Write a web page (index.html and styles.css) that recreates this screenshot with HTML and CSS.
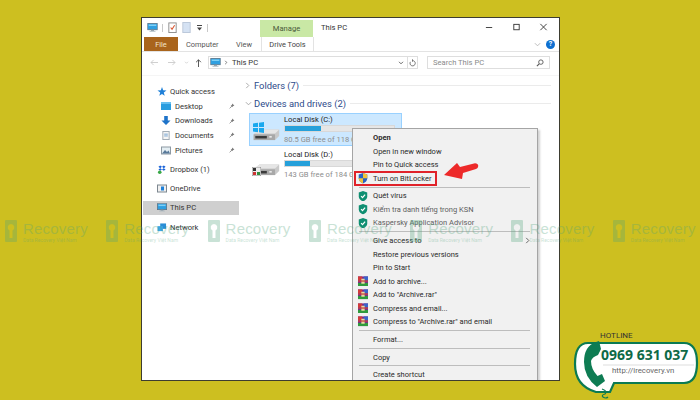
FILE: index.html
```html
<!DOCTYPE html>
<html lang="vi">
<head>
<meta charset="utf-8">
<title>This PC</title>
<link rel="stylesheet" href="styles.css">
</head>
<body>
<svg class="defs" width="0" height="0">
  <defs>
    <symbol id="pc" viewBox="0 0 14 12"><rect x="0.5" y="0.5" width="13" height="8.5" fill="#2f9fe0" stroke="#5a6f80"/><rect x="2" y="2" width="10" height="2" fill="#7fd0f5"/><rect x="5" y="9" width="4" height="1.5" fill="#8a9aa5"/><rect x="3" y="10.5" width="8" height="1" fill="#9fb0ba"/></symbol>
    <symbol id="pin" viewBox="0 0 8 8"><path d="M4.5 0.8 7.2 3.5 5.7 4 4 5.8 2.2 4 4 2.3Z" fill="#7a7a7a"/><path d="M2.8 5.2 0.8 7.2" stroke="#7a7a7a" stroke-width="1"/></symbol>
    <symbol id="shield" viewBox="0 0 10 11"><path d="M5 0 9.5 1.6V5.5C9.5 8 7.5 10 5 11 2.5 10 .5 8 .5 5.5V1.6Z" fill="#0f8f72"/><path d="M3 5.4 4.5 7 7.2 3.8" fill="none" stroke="#fff" stroke-width="1.3"/></symbol>
    <symbol id="rar" viewBox="0 0 12 12"><rect width="12" height="12" fill="#7b2a8f"/><rect y="0" width="5" height="5" fill="#d23a3a"/><rect x="7" y="0" width="5" height="5" fill="#3a63c9"/><rect y="8" width="12" height="4" fill="#2f9a3d"/><rect x="4" y="3" width="4" height="6" fill="#e8d9a0"/><rect y="5" width="12" height="1.5" fill="#c9423e"/></symbol>
    <symbol id="drive" viewBox="0 0 34 20"><path d="M2 11 9 5H33V13L28 18H2Z" fill="#c9c9c9"/><path d="M9 5H33L28 10H3Z" fill="#e6e6e6"/><rect x="2" y="11" width="26" height="7" fill="#a8a8a8"/><rect x="4" y="13" width="14" height="3" fill="#3a3a3a"/><rect x="21" y="13" width="3" height="2" fill="#e8e8e8"/></symbol>
    <symbol id="mark" viewBox="0 0 12 22"><path fill-rule="evenodd" d="M1 0H11Q12 0 12 1V21Q12 22 11 22H1Q0 22 0 21V1Q0 0 1 0ZM6 4A3.4 3.4 0 0 0 4.5 10.4V18H7.5V10.4A3.4 3.4 0 0 0 6 4Z" fill="#4fa37a"/></symbol>
  </defs>
</svg>

<main class="window">
  <header class="titlebar">
    <svg class="ic14" viewBox="0 0 14 12"><use href="#pc"/></svg>
    <span class="tsep"></span>
    <svg class="qat-doc" viewBox="0 0 9 12"><rect x="0.5" y="1" width="8" height="10.5" fill="#fff" stroke="#8a8a8a"/><path d="M2.5 6 4 8 6.8 3.5" fill="none" stroke="#d9532c" stroke-width="1.1"/></svg>
    <svg class="qat-doc gap" viewBox="0 0 9 12"><rect x="0.5" y="0.5" width="8" height="11" fill="#d5e2f3" stroke="#b9c6d8"/></svg>
    <svg class="qat-drop" viewBox="0 0 5 6"><rect y="0" width="5" height="1" fill="#444"/><path d="M0 2.5H5L2.5 5.5Z" fill="#444"/></svg>
    <span class="tsep"></span>
    <div class="manage">Manage</div>
    <div class="title">This PC</div>
    <div class="winbtns">
      <svg class="wb" viewBox="0 0 10 10"><path d="M1 5H8" stroke="#333" stroke-width="1"/></svg>
      <svg class="wb" viewBox="0 0 10 10"><rect x="2" y="1.5" width="6" height="6" fill="none" stroke="#333"/></svg>
      <svg class="wb" viewBox="0 0 10 10"><path d="M1.5 1 8.5 8M8.5 1 1.5 8" stroke="#333" stroke-width="1"/></svg>
    </div>
  </header>

  <nav class="tabs">
    <div class="tab-file">File</div>
    <div class="tab t-computer">Computer</div>
    <div class="tab t-view">View</div>
    <div class="tab t-drive">Drive Tools</div>
    <svg class="chev" viewBox="0 0 8 5"><path d="M1 1 4 4 7 1" fill="none" stroke="#b5b5b5"/></svg>
    <span class="help">?</span>
  </nav>

  <section class="addr">
    <svg class="nav-a" viewBox="0 0 10 8"><path d="M9 4H1M4 1 1 4 4 7" fill="none" stroke="#c9c9c9"/></svg>
    <svg class="nav-a" viewBox="0 0 10 8"><path d="M1 4H9M6 1 9 4 6 7" fill="none" stroke="#c9c9c9"/></svg>
    <svg class="nav-s" viewBox="0 0 6 4"><path d="M1 1 3 3 5 1" fill="none" stroke="#c9c9c9"/></svg>
    <svg class="nav-u" viewBox="0 0 8 10"><path d="M4 10V1M1 4 4 1 7 4" fill="none" stroke="#444" stroke-width="1.1"/></svg>
    <div class="addrbox">
      <svg class="ic-addr" viewBox="0 0 14 12"><use href="#pc"/></svg>
      <svg class="crumb" viewBox="0 0 4 6"><path d="M1 1 3 3 1 5" fill="none" stroke="#666"/></svg>
      <span class="addrtext">This PC</span>
      <svg class="addrdrop" viewBox="0 0 7 5"><path d="M1 1 3.5 3.5 6 1" fill="none" stroke="#555" stroke-width="1.1"/></svg>
    </div>
    <div class="refresh"><svg viewBox="0 0 8 9"><path d="M4 1.8A3 3 0 1 1 1.6 3.2M4 .3V3" fill="none" stroke="#666"/></svg></div>
    <div class="search">
      <span>Search This PC</span>
      <svg viewBox="0 0 9 9"><circle cx="5.5" cy="3.5" r="2.5" fill="none" stroke="#555"/><path d="M3.6 5.4 1 8" stroke="#555" stroke-width="1.2"/></svg>
    </div>
  </section>

  <div class="main">
    <aside class="side">
      <div class="s0"><svg class="si" viewBox="0 0 10 10"><path d="M5 0 6.3 3.6 10 3.8 7 6.1 8 9.8 5 7.7 2 9.8 3 6.1 0 3.8 3.7 3.6Z" fill="#1f80d8"/></svg>Quick access</div>
      <div class="s1"><svg class="si" viewBox="0 0 10 9"><rect y="1" width="10" height="7" fill="#2a9ddf"/><rect y="0" width="10" height="2" fill="#66bff0"/></svg>Desktop<svg class="pin" viewBox="0 0 8 8"><use href="#pin"/></svg></div>
      <div class="s1"><svg class="si" viewBox="0 0 10 10"><path d="M3 0H7V5H10L5 10 0 5H3Z" fill="#1e73c9"/></svg>Downloads<svg class="pin" viewBox="0 0 8 8"><use href="#pin"/></svg></div>
      <div class="s1"><svg class="si" viewBox="0 0 10 10"><rect x="1.5" y="0.5" width="7" height="9" fill="#f5f5f5" stroke="#9aa5b0"/><path d="M3 3.5H7M3 5.5H7" stroke="#6f9fcf"/></svg>Documents<svg class="pin" viewBox="0 0 8 8"><use href="#pin"/></svg></div>
      <div class="s1"><svg class="si" viewBox="0 0 10 8"><rect x="0.5" y="0.5" width="9" height="7" fill="#e4eef3" stroke="#8d99a3"/><path d="M1 7 4 3.5 6 5.5 7.5 4 9 7Z" fill="#58799a"/></svg>Pictures<svg class="pin" viewBox="0 0 8 8"><use href="#pin"/></svg></div>
      <div class="s0 g"><svg class="si" viewBox="0 0 10 10"><path d="M3 .5 5 2 3 3.5 1 2ZM7 .5 9 2 7 3.5 5 2ZM3 3.5 5 5 3 6.5 1 5ZM7 3.5 9 5 7 6.5 5 5Z" fill="#1a63d8"/><circle cx="2.5" cy="8" r="2" fill="#39a845"/></svg>Dropbox (1)</div>
      <div class="s0 g"><svg class="si" viewBox="0 0 10 8"><rect x="0.5" y="0.5" width="9" height="7" fill="#f1f1f1" stroke="#7d8790"/><rect x="4" y="2" width="3" height="4" fill="#1f80d8"/></svg>OneDrive</div>
      <div class="s0 g active"><svg class="si" viewBox="0 0 14 12"><use href="#pc"/></svg>This PC</div>
      <div class="s0 g"><svg class="si" viewBox="0 0 10 10"><rect x="3" y="0.5" width="6.5" height="6" fill="#2a8ed6"/><rect x="0" y="3.5" width="6" height="5.5" fill="#3ba5e8"/></svg>Network</div>
    </aside>

    <section class="content">
      <div class="group"><svg class="gc" viewBox="0 0 5 8"><path d="M1 1 4 4 1 7" fill="none" stroke="#a0a0a0"/></svg><span>Folders (7)</span><i></i></div>
      <div class="group g2"><svg class="gc wide" viewBox="0 0 8 5"><path d="M1 1 4 4 7 1" fill="none" stroke="#a0a0a0"/></svg><span>Devices and drives (2)</span><i></i></div>

      <div class="drive selected">
        <div class="dicon">
          <svg class="winlogo" viewBox="0 0 11 11"><path d="M0 1.5 5 .8V5H0ZM6 .7 11 0V5H6ZM0 6H5V10.2L0 9.5ZM6 6H11V11L6 10.3Z" fill="#19a8ee"/></svg>
          <svg class="dsvg" viewBox="0 0 34 20"><use href="#drive"/></svg>
        </div>
        <div class="dinfo">
          <div class="dname">Local Disk (C:)</div>
          <div class="dbar"><b class="fill-c"></b></div>
          <div class="dfree">80.5 GB free of 118 GB</div>
        </div>
      </div>
      <div class="drive">
        <div class="dicon">
          <svg class="dsvg" viewBox="0 0 34 20"><use href="#drive"/></svg>
          <svg class="share" viewBox="0 0 9 9"><rect width="9" height="9" fill="#eee" stroke="#555" stroke-width=".6"/><rect x="1" y="1" width="3" height="3" fill="#333"/><rect x="5" y="5" width="3" height="3" fill="#2f8f3f"/><rect x="1" y="5" width="3" height="3" fill="#c33"/></svg>
        </div>
        <div class="dinfo">
          <div class="dname">Local Disk (D:)</div>
          <div class="dbar"><b class="fill-d"></b></div>
          <div class="dfree">143 GB free of 184 GB</div>
        </div>
      </div>
    </section>
  </div>

  <div class="menu">
    <div class="mi strong">Open</div>
    <div class="mi">Open in new window</div>
    <div class="mi">Pin to Quick access</div>
    <div class="mi red"><svg class="mic" viewBox="0 0 10 11"><path d="M5 0 9.5 1.6V5.5C9.5 8 7.5 10 5 11 2.5 10 .5 8 .5 5.5V1.6Z" fill="#2a62c4"/><path d="M5 0 9.5 1.6V5.5H5ZM5 5.5H.5C.5 8 2.5 10 5 11Z" fill="#f0c23a"/></svg>Turn on BitLocker</div>
    <hr>
    <div class="mi"><svg class="mic" viewBox="0 0 10 11"><use href="#shield"/></svg>Quét virus</div>
    <div class="mi faint"><svg class="mic" viewBox="0 0 10 11"><use href="#shield"/></svg>Kiểm tra danh tiếng trong KSN</div>
    <div class="mi faint"><svg class="mic" viewBox="0 0 10 11"><use href="#shield"/></svg>Kaspersky Application Advisor</div>
    <hr>
    <div class="mi">Give access to<svg class="marrow" viewBox="0 0 5 8"><path d="M1 1 4 4 1 7" fill="none" stroke="#555"/></svg></div>
    <div class="mi">Restore previous versions</div>
    <div class="mi">Pin to Start</div>
    <div class="mi"><svg class="mic" viewBox="0 0 12 12"><use href="#rar"/></svg>Add to archive...</div>
    <div class="mi"><svg class="mic" viewBox="0 0 12 12"><use href="#rar"/></svg>Add to "Archive.rar"</div>
    <div class="mi"><svg class="mic" viewBox="0 0 12 12"><use href="#rar"/></svg>Compress and email...</div>
    <div class="mi"><svg class="mic" viewBox="0 0 12 12"><use href="#rar"/></svg>Compress to "Archive.rar" and email</div>
    <hr>
    <div class="mi">Format...</div>
    <hr>
    <div class="mi">Copy</div>
    <hr>
    <div class="mi">Create shortcut</div>
  </div>
</main>

<svg class="arrow" viewBox="0 0 38 23"><path d="M2 12 15 0 18 4 33 .3Q36 .3 36.3 3 36 5.5 34 6L21 10 20 16Z" fill="#ed2a2a"/></svg>

<div class="marks">
  <div class="wm"><svg viewBox="0 0 12 22"><use href="#mark"/></svg><div><strong>Recovery</strong><small>Data Recovery Việt Nam</small></div></div>
  <div class="wm"><svg viewBox="0 0 12 22"><use href="#mark"/></svg><div><strong>Recovery</strong><small>Data Recovery Việt Nam</small></div></div>
  <div class="wm"><svg viewBox="0 0 12 22"><use href="#mark"/></svg><div><strong>Recovery</strong><small>Data Recovery Việt Nam</small></div></div>
  <div class="wm"><svg viewBox="0 0 12 22"><use href="#mark"/></svg><div><strong>Recovery</strong><small>Data Recovery Việt Nam</small></div></div>
  <div class="wm"><svg viewBox="0 0 12 22"><use href="#mark"/></svg><div><strong>Recovery</strong><small>Data Recovery Việt Nam</small></div></div>
  <div class="wm"><svg viewBox="0 0 12 22"><use href="#mark"/></svg><div><strong>Recovery</strong><small>Data Recovery Việt Nam</small></div></div>
  <div class="wm"><svg viewBox="0 0 12 22"><use href="#mark"/></svg><div><strong>Recovery</strong><small>Data Recovery Việt Nam</small></div></div>
</div>

<aside class="hotline">
  <svg class="hot-bg" viewBox="0 0 128 66">
    <path d="M16 9H112Q125 9 125 29 125 49 112 49H42L38 58H24Q3 52 3 30 3 9 16 9Z" fill="#fff" stroke="#0b7a52" stroke-width="2.2"/>
    <path d="M24 8Q12 12 12 28 12 43 25 53L33 47 30 40 25.500 42Q19 35 19 27 20 23 26 21L29 15 27 7Z" fill="#0e7c53"/>
    <path d="M30 55Q36 57 33 60 29 61 31 63 34 65 36 63" fill="none" stroke="#0e7c53" stroke-width="1.2"/>
    <path d="M31 31H122" stroke="#cfcfcf" stroke-width=".7"/>
  </svg>
  <span class="hl-label">HOTLINE</span>
  <span class="hl-num">0969 631 037</span>
  <span class="hl-url">http://irecovery.vn</span>
</aside>
</body>
</html>
```

FILE: styles.css
```css
* { box-sizing: border-box; }
html, body { margin: 0; height: 100%; }
body {
  width: 700px; height: 400px; overflow: hidden; position: relative;
  background: #cdbf20; padding: 17px 0 0 141px;
  font-family: Roboto, "Open Sans", sans-serif; color: #2b2b2b;
}
.defs { position: absolute; }
svg { display: block; flex: none; }

.window {
  position: relative; width: 419px; height: 364px; background: #fff;
  border: 1px solid #3d3d30; overflow: hidden; display: flex; flex-direction: column;
}

.titlebar { height: 19px; display: flex; align-items: center; padding-left: 5px; font-size: 8px; flex: none; }
.ic14 { width: 11px; height: 9px; }
.tsep { width: 1px; height: 8px; background: #c8c8c8; margin: 0 5px; }
.tsep:first-of-type { margin: 0 5px 0 4px; }
.qat-doc { width: 9px; height: 11px; }
.qat-doc.gap { margin-left: 5px; }
.qat-drop { width: 5px; height: 6px; margin-left: 6px; }
.manage {
  align-self: stretch; width: 53px; margin: 2px 0 0 47px; background: #c9e8a5; color: #4a5a3a;
  display: flex; align-items: center; justify-content: center; font-size: 7.6px;
}
.title { margin-left: 8px; font-size: 7.6px; color: #333; }
.winbtns { margin-left: auto; display: flex; gap: 18px; padding-right: 11px; }
.wb { width: 9px; height: 9px; }

.tabs { height: 15px; display: flex; align-items: center; flex: none; font-size: 7.4px; color: #555; border-bottom: 1px solid #e3e3e3; }
.tab-file { width: 34px; height: 14px; margin-left: 2px; background: #a9641c; color: #f4e4c8; display: flex; align-items: center; justify-content: center; }
.t-computer { margin-left: 8px; width: 32px; white-space: nowrap; }
.t-view { margin-left: 18px; width: 15px; }
.t-drive { width: 53px; height: 15px; margin-left: 10px; text-align: center; line-height: 15px; border: 1px solid #e3e3e3; border-top: 0; border-bottom: 0; color: #444; }
.chev { width: 7px; height: 5px; margin-left: auto; }
.help { width: 9px; height: 9px; margin: 0 4px 0 5px; border-radius: 50%; background: #0e6fd0; color: #fff; font-size: 7px; line-height: 9px; text-align: center; font-weight: 700; }

.addr { height: 24px; display: flex; align-items: center; padding: 0 8px 2px 8px; flex: none; border-bottom: 1px solid #f5f5f5; }
.nav-a { width: 9px; height: 7px; margin-right: 8px; }
.nav-s { width: 5px; height: 3px; margin-right: 6px; }
.nav-u { width: 7px; height: 8px; margin-right: 6px; }
.addrbox { width: 200px; height: 13px; border: 1px solid #dedede; display: flex; align-items: center; padding-left: 1px; font-size: 7.6px; }
.ic-addr { width: 11px; height: 9px; }
.crumb { width: 4px; height: 5px; margin: 0 4px 0 3px; }
.addrtext { color: #333; }
.addrdrop { width: 6px; height: 4px; margin-left: auto; margin-right: 3px; }
.refresh { width: 10px; height: 13px; border: 1px solid #dedede; border-left: 0; display: flex; align-items: center; justify-content: center; }
.refresh svg { width: 7px; height: 8px; }
.search { width: 123px; height: 13px; margin-left: 9px; border: 1px solid #dedede; display: flex; align-items: center; justify-content: space-between; padding: 0 5px; font-size: 7.6px; color: #8a8a8a; }
.search svg { width: 8px; height: 8px; }

.main { flex: 1; display: flex; min-height: 0; }
.side { width: 97px; padding: 8px 0 0 1px; font-size: 7.6px; color: #333; flex: none; }
.s0, .s1 { height: 14.7px; display: flex; align-items: center; }
.s0 { padding-left: 14px; }
.s1 { padding-left: 18px; }
.g { margin-top: 4.6px; }
.si { width: 10px; height: 9px; margin-right: 4px; }
.s0 .si { margin-right: 3px; }
.pin { width: 6px; height: 6px; margin-left: auto; margin-right: 4px; }
.active { background: #cfcfcf; }

.content { flex: 1; min-width: 0; padding: 3px 8px 0 6px; }
.group { height: 13px; display: flex; align-items: center; font-size: 9.4px; color: #2c4a8a; }
.group + .group { margin-top: 5px; }
.g2 { margin-bottom: 3px; }
.gc { width: 5px; height: 7px; margin: 0 4px 0 0; }
.gc.wide { width: 7px; height: 5px; margin: 0 2px 0 0; }
.group i { flex: 1; height: 1px; background: #ebebeb; margin-left: 4px; }

.drive { width: 153px; height: 33px; margin-left: 4px; display: flex; margin-bottom: 2px; border: 1px solid transparent; }
.selected { background: #cce8ff; border-color: #99d1ff; }
.dicon { width: 34px; position: relative; padding: 11px 0 0 2px; }
.dsvg { width: 28px; height: 17px; }
.winlogo { position: absolute; left: 3px; top: 8px; width: 11px; height: 11px; }
.share { position: absolute; left: 2px; top: 18px; width: 9px; height: 9px; }
.dinfo { flex: 1; min-width: 0; }
.dname { font-size: 7.6px; height: 11px; line-height: 11px; color: #222; }
.dbar { width: 111px; height: 7px; background: #e6e6e6; border: 1px solid #d8d8d8; }
.dbar b { display: block; height: 100%; background: #26a0da; }
.fill-c { width: 36px; }
.fill-d { width: 25px; }
.dfree { font-size: 7.6px; line-height: 13px; color: #8d8d8d; white-space: nowrap; margin-top: 1px; }

.menu {
  position: absolute; left: 210px; top: 110px; width: 186px; padding: 2px 2px 0 2px; height: 262px;
  background: #f1f1f1; border: 1px solid #a5a5a5; box-shadow: 2px 2px 2px rgba(0,0,0,.18);
  font-size: 7.5px; color: #2a2a2a;
}
.mi { height: 13.5px; padding-left: 18px; display: flex; align-items: center; position: relative; white-space: nowrap; }
.strong { font-weight: 700; }
.faint { color: #5f5f5f; }
.mic { position: absolute; left: 3px; top: 1.5px; width: 10px; height: 10.5px; }
.marrow { margin-left: auto; margin-right: 5px; width: 5px; height: 7px; }
.red { outline: 2px solid #e0222a; outline-offset: -1px; width: 81px; }
.menu hr { height: 1px; margin: 1.6px 5px 1.6px 4px; border: 0; background: #bdbdbd; }

.arrow { position: absolute; left: 442px; top: 163px; width: 38px; height: 23px; }

.marks { position: absolute; left: 5px; top: 220px; display: flex; pointer-events: none; }
.wm { width: 101.3px; display: flex; align-items: flex-start; opacity: .3; flex: none; }
.wm svg { width: 12px; height: 22px; margin-right: 6px; }
.wm strong { display: block; font-weight: 400; font-size: 15px; line-height: 17px; color: #4fa37a; font-family: "Liberation Sans", sans-serif; letter-spacing: .2px; }
.wm small { display: block; font-size: 5px; line-height: 7px; color: #4fa37a; white-space: nowrap; }

.hotline { position: absolute; left: 572px; top: 334px; width: 128px; height: 66px; }
.hot-bg { position: absolute; left: 0; top: 0; width: 128px; height: 66px; }
.hl-label { position: absolute; left: 28px; top: -3px; font-size: 8px; line-height: 10px; color: #333; }
.hl-num { position: absolute; left: 29px; top: 12px; font-size: 14px; line-height: 18px; font-weight: 700; color: #0e6a47; white-space: nowrap; font-family: "Open Sans", sans-serif; }
.hl-url { position: absolute; left: 40px; top: 31px; font-size: 7.8px; line-height: 11px; color: #666; white-space: nowrap; }
```
